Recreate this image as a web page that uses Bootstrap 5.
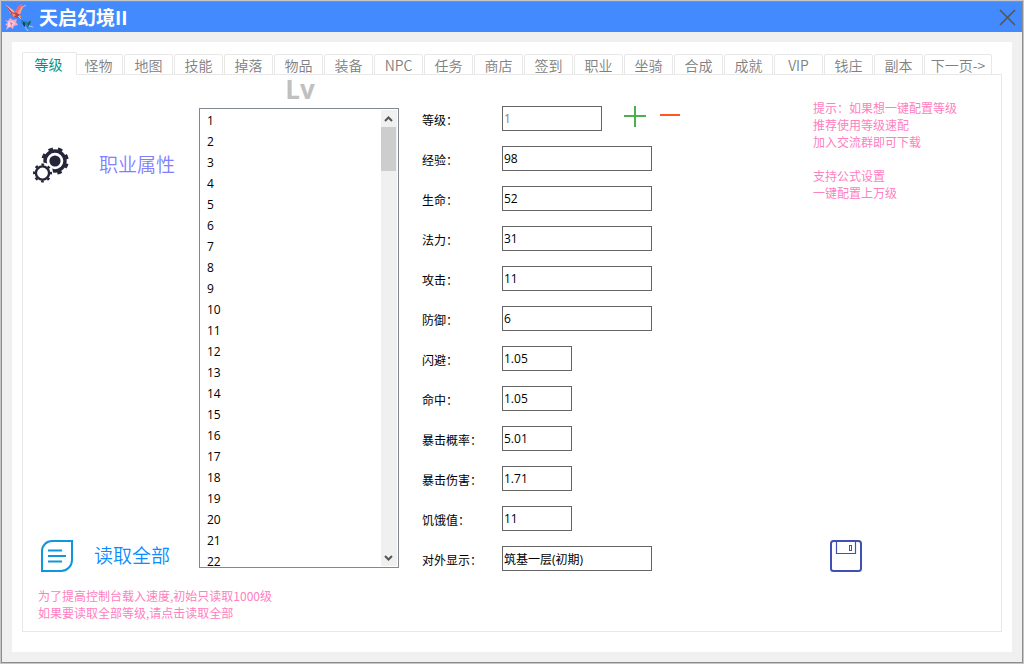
<!DOCTYPE html>
<html lang="zh-CN">
<head>
<meta charset="utf-8">
<meta name="viewport" content="width=device-width, initial-scale=1">
<title>天启幻境II</title>
<link href="https://cdn.jsdelivr.net/npm/bootstrap@5.3.0/dist/css/bootstrap.min.css" rel="stylesheet">
<style>
body{background:#c6c6c6;font-family:"Noto Sans CJK SC",sans-serif;font-size:12px;line-height:17px;color:#000}
.app-window{margin:1px;min-height:calc(100vh - 2px);border:1px solid #8c8c8c;background:#f0f0f0}
.title-bar{height:30px;background:#438aff;padding:0 6px 0 1px}
.title-bar h1{font-size:19px;line-height:30px;font-weight:700;color:#fff;padding-left:6px}
.bare{background:none;border:0;padding:0;color:inherit;display:flex;align-items:center}
.sheet{margin:10px;padding:10px 10px 20px}
.level-tabs{border:0;height:23px;margin-bottom:-1px;position:relative}
.level-tabs .nav-link{width:49px;height:21px;margin:0 1px 0 0;padding:0;border:1px solid #e8e8e8;border-radius:2px 2px 0 0;background:#fff;color:#808080;font-size:14px;line-height:20px;font-weight:350;text-align:center;white-space:nowrap}
.level-tabs .nav-link.active{width:55px;height:23px;margin-right:-3px;padding-right:2px;border-color:#e8e8e8 #e8e8e8 #fff;color:#009688;position:relative;z-index:1;font-weight:400}
.level-tabs .nav-link.wide{width:68px}
.pane{border:1px solid #e8e8e8;padding-bottom:10px}
.side{width:176px;padding-top:68px}
.side .bare{height:44px;font-size:19px;line-height:26px;font-weight:350}
.side .bare span{padding-bottom:2px}
.job{padding-left:10px;gap:29px;color:#8080ff}
.read-all{padding-left:17px;gap:20px;color:#0a8cff}
.levels{width:200px;margin-right:23px}
.levels h2{height:33px;line-height:28px;font-size:26px;font-weight:700;color:#c0c0c0;font-family:"Open Sans",sans-serif;padding-left:2px}
.list-frame{height:460px;border:1px solid #828790}
.list-frame select{border:0;outline:0;padding:3px 0 0;overflow:hidden;scrollbar-width:none;font-family:"Open Sans",sans-serif;font-size:12px;min-width:0;height:458px;background:#fff;color:#000}
.list-frame select::-webkit-scrollbar{display:none}
.list-frame option{height:21px;min-height:21px;line-height:21px;padding:0 7px}
.scroller{width:16px;margin:1px 1px 1px 0;background:#f0f0f0}
.scroller svg{display:block}
.thumb{height:44px;width:15px;background:#cdcdcd}
.fields{padding-top:23px}
.field-row{height:40px;padding-top:8px}
.field-row label{width:80px;padding-top:5px}
.field-row input{width:150px;height:25px;border:1px solid #646464;border-radius:0;padding:0 1px;font-family:"Open Sans","Noto Sans CJK SC",sans-serif;font-size:12px;color:#000;background:#fff}
.field-row input.mid{width:100px}
.field-row input.short{width:70px}
.field-row input:disabled{color:#808080}
.step-buttons{padding-left:22px;gap:14px}
.tips{width:188px;padding-top:24px}
.tips p{margin-bottom:17px}
.pink{color:#ff80c0}
.save{margin:0 0 6px 17px}
.note{padding:9px 0 0 15px}
</style>
</head>
<body>
<div class="app-window d-flex flex-column">
  <header class="title-bar d-flex align-items-center">
    <svg width="30" height="30" viewBox="0 0 30 30" aria-hidden="true">
      <path d="M2 2l8 6 3 4-6-1-2-4z" fill="#f3b0a4"/><path d="M2 2l6 7 4 4-5-3z" fill="#a33a5e"/>
      <path d="M12 10l3-6 4-2 1 3-3 7-5 3z" fill="#ee6b74"/><path d="M14 12l5-8 1 1-3 7z" fill="#f9a28c"/>
      <path d="M8 10l6 1 5 3-4 2-6-2z" fill="#c33e53"/><path d="M9 11l4 2-3 2zM16 13l3 1-3 2z" fill="#ff9a48"/>
      <path d="M2 18l3 1 2-3 3 2 4-1-1 3 2 3-4 1-1 3-3-2-4 3 1-4-2-2 3-1z" fill="#f3a7c4"/><path d="M5 20l4-1 3 2-3 3-4 1z" fill="#ffd0dc"/><path d="M7 20l3 1-2 3z" fill="#df6f9c"/>
      <path d="M18 18l3 1 4 1 3-2v3l-2 2-1 4-2-4-4-1z" fill="#237c91"/><path d="M20 20l2 1v4l-2-2zM25 22l2-3-1 5z" fill="#173d63"/><path d="M22 25l3 4M26 24l4 1M18 17l-3-3M20 5l3-2" stroke="#a9c9f5"/>
    </svg>
    <h1 class="m-0">天启幻境II</h1>
    <button class="bare ms-auto" type="button" aria-label="关闭"><svg width="17" height="17" viewBox="0 0 17 17"><path d="M1 1l15 15M16 1L1 16" stroke="#555" stroke-width="1.6"/></svg></button>
  </header>

  <main class="sheet bg-white flex-grow-1">
    <nav class="nav nav-tabs level-tabs flex-nowrap align-items-end" role="tablist">
      <button class="nav-link active" type="button" role="tab">等级</button>
      <button class="nav-link" type="button" role="tab">怪物</button>
      <button class="nav-link" type="button" role="tab">地图</button>
      <button class="nav-link" type="button" role="tab">技能</button>
      <button class="nav-link" type="button" role="tab">掉落</button>
      <button class="nav-link" type="button" role="tab">物品</button>
      <button class="nav-link" type="button" role="tab">装备</button>
      <button class="nav-link" type="button" role="tab">NPC</button>
      <button class="nav-link" type="button" role="tab">任务</button>
      <button class="nav-link" type="button" role="tab">商店</button>
      <button class="nav-link" type="button" role="tab">签到</button>
      <button class="nav-link" type="button" role="tab">职业</button>
      <button class="nav-link" type="button" role="tab">坐骑</button>
      <button class="nav-link" type="button" role="tab">合成</button>
      <button class="nav-link" type="button" role="tab">成就</button>
      <button class="nav-link" type="button" role="tab">VIP</button>
      <button class="nav-link" type="button" role="tab">钱庄</button>
      <button class="nav-link" type="button" role="tab">副本</button>
      <button class="nav-link wide" type="button" role="tab">下一页-&gt;</button>
    </nav>

    <section class="pane">
      <div class="d-flex">
        <div class="side d-flex flex-column justify-content-between flex-shrink-0">
          <button class="bare job" type="button">
            <svg width="37" height="37" viewBox="0 0 37 37" fill="none" stroke="#26263a" aria-hidden="true">
              <circle cx="22" cy="14" r="10" stroke-width="3.4"/>
              <circle cx="22" cy="14" r="12" stroke-width="3.6" stroke-dasharray="4.4 5.02" stroke-dashoffset="-2.6"/>
              <circle cx="22" cy="14" r="5.6" fill="#26263a" stroke="none"/>
              <circle cx="9.500" cy="26" r="10.600" fill="#fff" stroke="none"/>
              <circle cx="9.500" cy="26" r="6.600" stroke-width="2.400"/>
              <circle cx="9.500" cy="26" r="8.400" stroke-width="2.200" stroke-dasharray="2.800 3.797" stroke-dashoffset="1.400"/>
            </svg>
            <span>职业属性</span>
          </button>
          <button class="bare read-all" type="button">
            <svg width="34" height="34" viewBox="0 0 34 34" fill="none" stroke="#1296db" stroke-width="2" aria-hidden="true">
              <path d="M12 2h20v19a11 11 0 0 1-11 11H2V12A10 10 0 0 1 12 2z"/>
              <path d="M8 11.500h14M8 17h18M8 22.500h14"/>
            </svg>
            <span>读取全部</span>
          </button>
        </div>

        <div class="levels flex-shrink-0">
          <h2 class="m-0 text-center">Lv</h2>
          <div class="list-frame d-flex">
            <select class="flex-grow-1" size="22" aria-label="等级列表">
              <option>1</option><option>2</option><option>3</option><option>4</option><option>5</option><option>6</option><option>7</option><option>8</option><option>9</option><option>10</option><option>11</option><option>12</option><option>13</option><option>14</option><option>15</option><option>16</option><option>17</option><option>18</option><option>19</option><option>20</option><option>21</option><option>22</option>
            </select>
            <div class="scroller d-flex flex-column" aria-hidden="true">
              <svg width="16" height="17" viewBox="0 0 16 17"><path d="M4 11l3.500-3.500L11 11" fill="none" stroke="#555" stroke-width="2"/></svg>
              <div class="thumb"></div>
              <svg class="mt-auto" width="16" height="17" viewBox="0 0 16 17"><path d="M4 7l3.500 3.500L11 7" fill="none" stroke="#555" stroke-width="2"/></svg>
            </div>
          </div>
        </div>

        <form class="fields flex-shrink-0">
          <div class="field-row d-flex align-items-start"><label for="f1">等级：</label><input class="mid" id="f1" type="text" value="1" disabled>
            <div class="step-buttons d-flex">
              <button class="bare" type="button" aria-label="添加"><svg width="22" height="22" viewBox="0 0 22 22"><path d="M11 0v21M0 10h22" stroke="#4caf50" stroke-width="2"/></svg></button>
              <button class="bare" type="button" aria-label="删除"><svg width="20" height="20" viewBox="0 0 20 20"><path d="M0 8h20" stroke="#ff5722" stroke-width="2"/></svg></button>
            </div>
          </div>
          <div class="field-row d-flex align-items-start"><label for="f2">经验：</label><input id="f2" type="text" value="98"></div>
          <div class="field-row d-flex align-items-start"><label for="f3">生命：</label><input id="f3" type="text" value="52"></div>
          <div class="field-row d-flex align-items-start"><label for="f4">法力：</label><input id="f4" type="text" value="31"></div>
          <div class="field-row d-flex align-items-start"><label for="f5">攻击：</label><input id="f5" type="text" value="11"></div>
          <div class="field-row d-flex align-items-start"><label for="f6">防御：</label><input id="f6" type="text" value="6"></div>
          <div class="field-row d-flex align-items-start"><label for="f7">闪避：</label><input class="short" id="f7" type="text" value="1.05"></div>
          <div class="field-row d-flex align-items-start"><label for="f8">命中：</label><input class="short" id="f8" type="text" value="1.05"></div>
          <div class="field-row d-flex align-items-start"><label for="f9">暴击概率：</label><input class="short" id="f9" type="text" value="5.01"></div>
          <div class="field-row d-flex align-items-start"><label for="f10">暴击伤害：</label><input class="short" id="f10" type="text" value="1.71"></div>
          <div class="field-row d-flex align-items-start"><label for="f11">饥饿值：</label><input class="short" id="f11" type="text" value="11"></div>
          <div class="field-row d-flex align-items-start"><label for="f12">对外显示：</label><input id="f12" type="text" value="筑基一层(初期)"></div>
        </form>

        <aside class="tips ms-auto d-flex flex-column justify-content-between align-items-start">
          <div class="pink">
            <p>提示：如果想一键配置等级<br>推荐使用等级速配<br>加入交流群即可下载</p>
            <p>支持公式设置<br>一键配置上万级</p>
          </div>
          <button class="bare save" type="button" aria-label="保存">
            <svg width="32" height="32" viewBox="0 0 32 32" fill="none" stroke="#3f51b5">
              <rect x="1" y="1" width="30" height="30" rx="2.500" stroke-width="2"/>
              <path d="M6.500 1v12.500h19V1" stroke-width="1.200"/>
              <rect x="19.500" y="5.500" width="2" height="5"/>
            </svg>
          </button>
        </aside>
      </div>
      <p class="note pink mb-0">为了提高控制台载入速度,初始只读取1000级<br>如果要读取全部等级,请点击读取全部</p>
    </section>
  </main>
</div>
<script src="https://cdn.jsdelivr.net/npm/bootstrap@5.3.0/dist/js/bootstrap.bundle.min.js"></script>
</body>
</html>
